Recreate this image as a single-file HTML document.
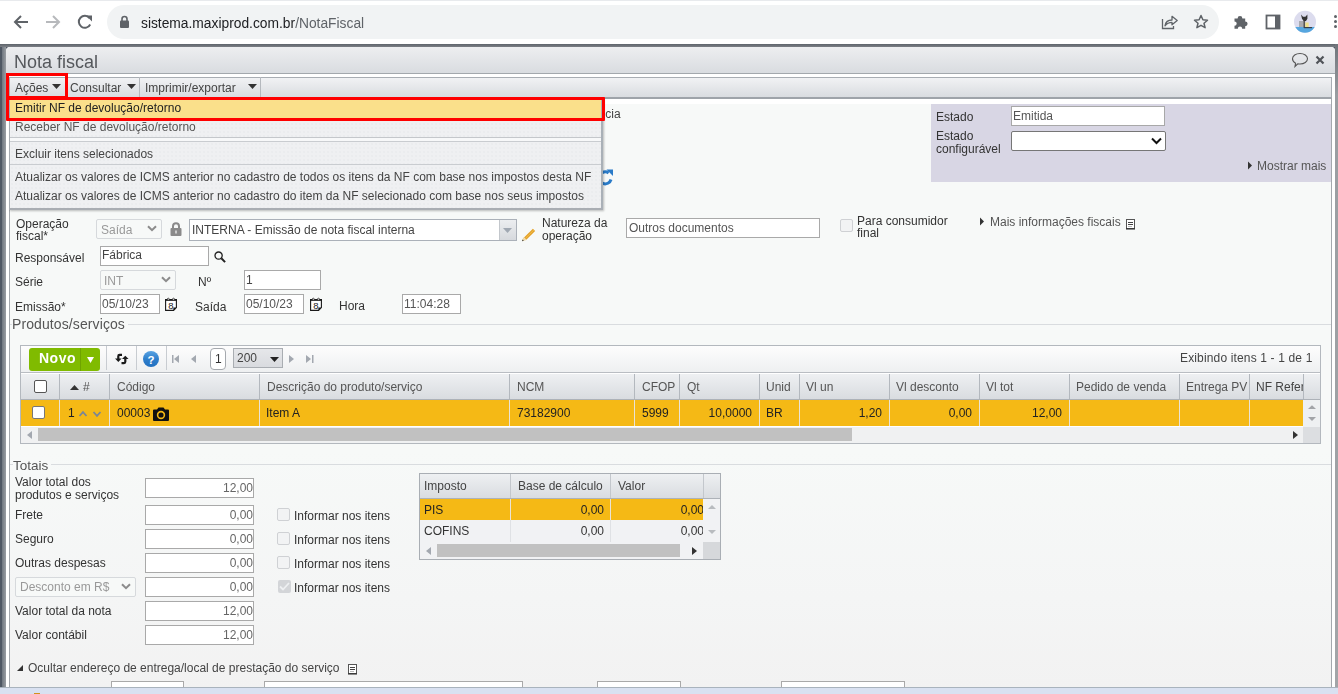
<!DOCTYPE html>
<html><head><meta charset="utf-8">
<style>
*{box-sizing:border-box}
html,body{margin:0;padding:0}
body{width:1338px;height:694px;overflow:hidden;position:relative;background:#f6f7f7;font-family:"Liberation Sans",sans-serif;font-size:12px;color:#333}
.a{position:absolute}
.t{will-change:transform;position:absolute;white-space:nowrap;line-height:14px;font-size:12px;color:#333}
.inp{position:absolute;background:#fff;border:1px solid #a9a9a9}
.sel{position:absolute;background:#f7f9f8;border:1px solid #d6d9dc;border-radius:2px}
.vd{position:absolute;width:1px;background:#c5c9ce}
</style></head><body>

<!-- ===== Browser chrome ===== -->
<div class="a" style="left:0;top:0;width:1338px;height:44px;background:#fff"></div>
<div class="a" style="left:0;top:0;width:1338px;height:1px;background:#e8eaed"></div>
<div class="a" style="left:107px;top:5px;width:1112px;height:34px;border-radius:17px;background:#f1f3f4"></div>
<!-- back -->
<svg class="a" style="left:13px;top:14px" width="16" height="16" viewBox="0 0 16 16"><path d="M15 8H2.5M8 2L2 8l6 6" fill="none" stroke="#5f6368" stroke-width="2"/></svg>
<!-- forward -->
<svg class="a" style="left:45px;top:14px" width="16" height="16" viewBox="0 0 16 16"><path d="M1 8h12.5M8 2l6 6-6 6" fill="none" stroke="#b7b9bc" stroke-width="2"/></svg>
<!-- reload -->
<svg class="a" style="left:77px;top:14px" width="16" height="16" viewBox="0 0 16 16"><path d="M13.2 10.5A6 6 0 1 1 12.5 4" fill="none" stroke="#5f6368" stroke-width="2"/><path d="M9 1.5h6v6z" fill="#5f6368"/></svg>
<!-- lock -->
<svg class="a" style="left:119px;top:15px" width="11" height="13" viewBox="0 0 11 13"><rect x="1" y="5.5" width="9" height="7.5" rx="1" fill="#5f6368"/><path d="M3 6V4a2.5 2.5 0 0 1 5 0v2" fill="none" stroke="#5f6368" stroke-width="1.6"/></svg>
<div class="t" style="left:141px;top:15px;font-size:13.8px;line-height:17px;color:#202124">sistema.maxiprod.com.br<span style="color:#5f6368">/NotaFiscal</span></div>
<!-- share -->
<svg class="a" style="left:1161px;top:14px" width="18" height="16" viewBox="0 0 18 16"><path d="M1.5 5V14.5H12.5V12" fill="none" stroke="#5f6368" stroke-width="1.3"/><path d="M4 11.8C4.6 8 7.2 6 11 6V2.3L16.2 6.6L11 10.8V8.4C8.2 8.4 5.8 9.6 4 11.8Z" fill="none" stroke="#5f6368" stroke-width="1.3" stroke-linejoin="round"/></svg>
<!-- star -->
<svg class="a" style="left:1193px;top:14px" width="16" height="16" viewBox="0 0 16 16"><path d="M8 1.5l1.9 4.3 4.6.4-3.5 3 1.1 4.5L8 11.3l-4.1 2.4 1.1-4.5-3.5-3 4.6-.4z" fill="none" stroke="#5f6368" stroke-width="1.5" stroke-linejoin="round"/></svg>
<!-- puzzle -->
<svg class="a" style="left:1233px;top:14px" width="16" height="16" viewBox="0 0 16 16"><path d="M1.5 4.5H4.6A2.4 2.4 0 1 1 9.4 4.5H12.2V7.4A2.4 2.4 0 1 1 12.2 12.2V14.8H9.2A2.2 2.2 0 1 0 4.8 14.8H1.5V11.8A2.2 2.2 0 1 0 1.5 7.4z" fill="#5f6368"/></svg>
<!-- sidebar -->
<svg class="a" style="left:1265px;top:14px" width="16" height="16" viewBox="0 0 16 16"><rect x="1.5" y="1.5" width="13" height="13" fill="none" stroke="#5f6368" stroke-width="1.8"/><rect x="10" y="1.5" width="4.5" height="13" fill="#5f6368"/></svg>
<!-- avatar -->
<svg class="a" style="left:1293px;top:10px" width="24" height="24" viewBox="0 0 24 24"><defs><clipPath id="cav"><circle cx="12" cy="11.8" r="11"/></clipPath></defs><g clip-path="url(#cav)"><rect width="24" height="24" fill="#dcdcee"/><rect y="17" width="24" height="7" fill="#56a6df"/><path d="M8 4.5l2 2.2h2.4l2-2.2v4.2l-1.4 2.3h-2.4L9 8.7z" fill="#333"/><rect x="6" y="11" width="5" height="6" fill="#a9abb0"/><rect x="10.5" y="11" width="1.6" height="7" fill="#555"/><rect x="12.3" y="12.5" width="3.4" height="5" fill="#efe08a"/><rect x="11" y="17" width="8" height="1.2" fill="#3a3f48"/></g></svg>
<!-- dots -->
<div class="a" style="left:1334px;top:15px;width:3px;height:3px;border-radius:50%;background:#5f6368"></div><div class="a" style="left:1334px;top:20px;width:3px;height:3px;border-radius:50%;background:#5f6368"></div><div class="a" style="left:1334px;top:25px;width:3px;height:3px;border-radius:50%;background:#5f6368"></div>

<!-- ===== Window frame ===== -->
<div class="a" style="left:0;top:44px;width:1338px;height:650px;background:#4f5864"></div><div class="a" style="left:0;top:44px;width:1338px;height:3px;background:linear-gradient(#5e646b,#7b7f85)"></div>
<div class="a" style="left:2px;top:47px;width:4px;height:640px;background:linear-gradient(90deg,#6f7780,#9a9ea3)"></div>
<div class="a" style="left:1335px;top:44px;width:3px;height:643px;background:linear-gradient(#6f747a,#9a9da1 8%,#a3a5a8)"></div>
<div class="a" style="left:6px;top:47px;width:1329px;height:640px;background:#fff;border-radius:4px 4px 0 0"></div>
<!-- title bar -->
<div class="a" style="left:6px;top:47px;width:1329px;height:27px;border-radius:4px 4px 0 0;background:linear-gradient(#edeef0,#d9dce0);border-bottom:1px solid #a3a8ad"></div>
<div class="t" style="left:14px;top:52px;font-size:18px;line-height:21px;color:#55585c">Nota fiscal</div>
<svg class="a" style="left:1291px;top:52px" width="18" height="16" viewBox="0 0 18 16"><path d="M9 1.5c4.2 0 7.5 2.4 7.5 5.3S13.2 12 9 12c-.8 0-1.5-.1-2.2-.2L4 14.5l.6-3.3C2.7 10.2 1.5 8.6 1.5 6.8 1.5 3.9 4.8 1.5 9 1.5z" fill="none" stroke="#555" stroke-width="1.1"/></svg>
<svg class="a" style="left:1315px;top:55px" width="10" height="10" viewBox="0 0 10 10"><path d="M1.5 1.5l7 7M8.5 1.5l-7 7" stroke="#505358" stroke-width="2.2"/></svg>

<!-- content background -->
<div class="a" style="left:9px;top:98px;width:1323px;height:589px;background:linear-gradient(#f7f9f8 0%,#f7f9f8 60%,#f4f5f5 85%,#f2f2f2 100%);border-left:1px solid #a4a8ad;border-right:1px solid #a4a8ad"></div>
<div class="a" style="left:10px;top:98px;width:1321px;height:6px;background:#fff"></div>

<!-- toolbar -->
<div class="a" style="left:9px;top:77px;width:1323px;height:22px;background:linear-gradient(#f1f2f4,#d9dce0);border:1px solid #a8adb3;border-bottom:2px solid #9ea3a9"></div>
<div class="t" style="left:15px;top:81px;color:#444">Ações</div>
<svg class="a" style="left:52px;top:84px" width="9" height="5"><path d="M0 0h9L4.5 5z" fill="#333"/></svg>
<div class="vd" style="left:67px;top:77px;height:20px;background:#b5b9be"></div>
<div class="t" style="left:70px;top:81px;color:#444">Consultar</div>
<svg class="a" style="left:127px;top:84px" width="9" height="5"><path d="M0 0h9L4.5 5z" fill="#333"/></svg>
<div class="vd" style="left:139px;top:77px;height:20px;background:#b5b9be"></div>
<div class="t" style="left:145px;top:81px;color:#444">Imprimir/exportar</div>
<svg class="a" style="left:248px;top:84px" width="9" height="5"><path d="M0 0h9L4.5 5z" fill="#333"/></svg>
<div class="vd" style="left:260px;top:77px;height:20px;background:#b5b9be"></div>


<!-- hidden-ish label under menu -->
<div class="t" style="left:592px;top:107px;color:#444">ência</div>
<svg class="a" style="left:599px;top:168px" width="15" height="19" viewBox="0 0 15 19"><path d="M12 11.5a6 6 0 1 1-2.4-6.6" fill="none" stroke="#2a7bc8" stroke-width="3"/><path d="M7.5 1.5h6.5v6.5z" fill="#2a7bc8"/></svg>

<!-- status panel -->
<div class="a" style="left:931px;top:104px;width:400px;height:78px;background:#d8d6e4"></div>
<div class="t" style="left:936px;top:110px">Estado</div>
<div class="inp" style="left:1011px;top:106px;width:154px;height:20px;border-color:#a8a8a8"></div>
<div class="t" style="left:1013px;top:109px;color:#555">Emitida</div>
<div class="t" style="left:936px;top:130px;line-height:13px">Estado<br>configurável</div>
<div class="a" style="left:1011px;top:131px;width:155px;height:20px;background:#fff;border:1px solid #767676;border-radius:2px"></div>
<svg class="a" style="left:1151px;top:137px" width="11" height="8" viewBox="0 0 11 8"><path d="M1 1.5l4.5 4.5L10 1.5" fill="none" stroke="#111" stroke-width="2"/></svg>
<svg class="a" style="left:1247px;top:161px" width="6" height="9"><path d="M1 0.5l4 4-4 4z" fill="#333"/></svg>
<div class="t" style="left:1257px;top:159px;color:#555">Mostrar mais</div>

<!-- form rows -->
<div class="t" style="left:16px;top:218px;line-height:12px">Operação<br>fiscal*</div>
<div class="sel" style="left:96px;top:219px;width:66px;height:20px"></div>
<div class="t" style="left:101px;top:223px;color:#999">Saída</div>
<svg class="a" style="left:147px;top:225px" width="10" height="7" viewBox="0 0 10 7"><path d="M1 1.2l4 4 4-4" fill="none" stroke="#8c8c8c" stroke-width="2"/></svg>
<svg class="a" style="left:170px;top:222px" width="12" height="14" viewBox="0 0 12 14"><rect x="0.5" y="6" width="11" height="8" rx="1" fill="#8a8a8a"/><path d="M3 6.5V4.2a3 3 0 0 1 6 0v2.3" fill="none" stroke="#8a8a8a" stroke-width="2"/><rect x="5.2" y="8.5" width="1.6" height="3" fill="#ddd"/></svg>
<div class="a" style="left:189px;top:219px;width:328px;height:22px;background:#fff;border:1px solid #abb1b9"></div>
<div class="a" style="left:499px;top:220px;width:17px;height:20px;background:linear-gradient(#eceef0,#d6d9dd);border-left:1px solid #c3c7cc"></div>
<svg class="a" style="left:503px;top:228px" width="9" height="5"><path d="M0 0h9L4.5 5z" fill="#a0a8b2"/></svg>
<div class="t" style="left:192px;top:223px;color:#444">INTERNA - Emissão de nota fiscal interna</div>
<svg class="a" style="left:521px;top:227px" width="16" height="15" viewBox="0 0 16 15"><path d="M4.2 11.6L13 2.8" stroke="#e3a02a" stroke-width="3.2" stroke-linecap="butt"/><path d="M4.2 11.6L13 2.8" stroke="#f2c14a" stroke-width="1"/><path d="M1 14.2L2.3 10.3L5.5 13z" fill="#efd7a0"/><path d="M1 14.2L1.6 12.4L2.9 13.6z" fill="#333"/></svg>
<div class="t" style="left:542px;top:217px;line-height:13px">Natureza da<br>operação</div>
<div class="inp" style="left:626px;top:218px;width:194px;height:20px"></div>
<div class="t" style="left:629px;top:221px;color:#555">Outros documentos</div>
<div class="a" style="left:840px;top:219px;width:13px;height:13px;border:1px solid #cfd1d4;border-radius:2px;background:#f2f3f4"></div>
<div class="t" style="left:857px;top:215px;line-height:12px">Para consumidor<br>final</div>
<svg class="a" style="left:979px;top:217px" width="6" height="9"><path d="M1 0.5l4 4-4 4z" fill="#333"/></svg>
<div class="t" style="left:990px;top:215px;color:#555">Mais informações fiscais</div>
<svg class="a" style="left:1126px;top:219px" width="10" height="11" viewBox="0 0 10 11"><rect x="0.5" y="0.5" width="8" height="9" fill="#fff" stroke="#555" stroke-width="1"/><path d="M0 10h9" stroke="#222" stroke-width="1"/><path d="M2 3.5h5M2 5.5h5" stroke="#444" stroke-width="1"/><path d="M2 7.5h4" stroke="#bbb" stroke-width="1"/></svg>

<div class="t" style="left:15px;top:251px">Responsável</div>
<div class="inp" style="left:100px;top:246px;width:109px;height:20px"></div>
<div class="t" style="left:102px;top:248px;color:#444">Fábrica</div>
<svg class="a" style="left:214px;top:251px" width="12" height="12" viewBox="0 0 12 12"><circle cx="4.6" cy="4.6" r="3.6" fill="none" stroke="#222" stroke-width="1.3"/><path d="M7.3 7.3l3.8 3.8" stroke="#222" stroke-width="2"/></svg>

<div class="t" style="left:15px;top:275px">Série</div>
<div class="sel" style="left:100px;top:270px;width:76px;height:20px"></div>
<div class="t" style="left:104px;top:274px;color:#999">INT</div>
<svg class="a" style="left:161px;top:276px" width="10" height="7" viewBox="0 0 10 7"><path d="M1 1.2l4 4 4-4" fill="none" stroke="#8c8c8c" stroke-width="2"/></svg>
<div class="t" style="left:198px;top:275px">Nº</div>
<div class="inp" style="left:244px;top:270px;width:77px;height:20px"></div>
<div class="t" style="left:246px;top:273px;color:#444">1</div>

<div class="t" style="left:15px;top:300px">Emissão*</div>
<div class="inp" style="left:100px;top:294px;width:60px;height:20px"></div>
<div class="t" style="left:102px;top:297px;color:#555">05/10/23</div>
<svg class="a" style="left:164px;top:297px" width="14" height="15" viewBox="0 0 14 15"><path d="M1.6 2.6H12.4V10.6L9.6 13.4H1.6z" fill="#fff" stroke="#1a1a1a" stroke-width="1.1"/><rect x="1" y="2" width="12" height="1.8" fill="#1a1a1a"/><circle cx="4.3" cy="2.2" r="1" fill="#fff" stroke="#1a1a1a" stroke-width="0.7"/><circle cx="9.5" cy="2.2" r="1" fill="#fff" stroke="#1a1a1a" stroke-width="0.7"/><path d="M9.4 13.4V10.6H12.4z" fill="#1a1a1a"/><text x="7" y="12" font-size="9.5" text-anchor="middle" font-family="Liberation Sans" fill="#1a1a1a">8</text></svg>
<div class="t" style="left:195px;top:300px">Saída</div>
<div class="inp" style="left:244px;top:294px;width:60px;height:20px"></div>
<div class="t" style="left:246px;top:297px;color:#555">05/10/23</div>
<svg class="a" style="left:309px;top:297px" width="14" height="15" viewBox="0 0 14 15"><path d="M1.6 2.6H12.4V10.6L9.6 13.4H1.6z" fill="#fff" stroke="#1a1a1a" stroke-width="1.1"/><rect x="1" y="2" width="12" height="1.8" fill="#1a1a1a"/><circle cx="4.3" cy="2.2" r="1" fill="#fff" stroke="#1a1a1a" stroke-width="0.7"/><circle cx="9.5" cy="2.2" r="1" fill="#fff" stroke="#1a1a1a" stroke-width="0.7"/><path d="M9.4 13.4V10.6H12.4z" fill="#1a1a1a"/><text x="7" y="12" font-size="9.5" text-anchor="middle" font-family="Liberation Sans" fill="#1a1a1a">8</text></svg>
<div class="t" style="left:339px;top:299px">Hora</div>
<div class="inp" style="left:402px;top:294px;width:59px;height:20px"></div>
<div class="t" style="left:404px;top:297px;color:#555">11:04:28</div>

<!-- Produtos/serviços legend -->
<div class="a" style="left:10px;top:324px;width:1321px;height:1px;background:#d9dcdf"></div>
<div class="t" style="left:12px;top:316px;font-size:14px;letter-spacing:0.1px;line-height:17px;color:#555;background:#f7f9f8;padding-right:3px">Produtos/serviços</div>


<!-- ===== products grid ===== -->
<div class="a" style="left:20px;top:345px;width:1301px;height:99px;background:#fff;border:1px solid #b3b8be"></div>
<div class="a" style="left:21px;top:346px;width:1299px;height:27px;background:linear-gradient(#fdfdfd,#eef0f1);border-bottom:1px solid #b9bdc2"></div>
<div class="a" style="left:29px;top:348px;width:71px;height:23px;background:#80bb00;border-radius:3px"></div>
<div class="a" style="left:80px;top:348px;width:1px;height:23px;background:#6fa300"></div>
<div class="t" style="left:39px;top:350px;font-size:14px;line-height:17px;font-weight:bold;letter-spacing:0.5px;color:#fff">Novo</div>
<svg class="a" style="left:87px;top:357px" width="7" height="6"><path d="M0 0h7L3.5 6z" fill="#fff"/></svg>
<div class="vd" style="left:106px;top:346px;height:24px;background:#c8ccd1"></div>
<svg class="a" style="left:114px;top:353px" width="16" height="12" viewBox="0 0 16 12"><path d="M8 1.9H5.6Q4.3 1.9 4.3 3.2V6.5" fill="none" stroke="#1a1a1a" stroke-width="2.2"/><path d="M1 5.6H7.6L4.3 9z" fill="#1a1a1a"/><path d="M7.5 10.1H10Q11.3 10.1 11.3 8.8V5.5" fill="none" stroke="#1a1a1a" stroke-width="2.2"/><path d="M8 6.1H14.6L11.3 2.7z" fill="#1a1a1a"/></svg>
<div class="vd" style="left:136px;top:346px;height:24px;background:#c8ccd1"></div>
<svg class="a" style="left:143px;top:351px" width="16" height="16" viewBox="0 0 16 16"><defs><linearGradient id="hg" x1="0" y1="0" x2="0" y2="1"><stop offset="0" stop-color="#5aa3e3"/><stop offset="0.5" stop-color="#2f7fcc"/><stop offset="1" stop-color="#2270c0"/></linearGradient></defs><circle cx="8" cy="8" r="8" fill="url(#hg)"/><text x="8" y="12.7" font-size="11.5" font-weight="bold" text-anchor="middle" font-family="Liberation Sans" fill="#fff">?</text></svg>
<div class="vd" style="left:166px;top:346px;height:24px;background:#c8ccd1"></div>
<svg class="a" style="left:172px;top:355px" width="8" height="8"><rect x="0" y="0" width="1.5" height="8" fill="#a3a8b0"/><path d="M7 0v8L2 4z" fill="#a3a8b0"/></svg>
<svg class="a" style="left:191px;top:355px" width="6" height="8"><path d="M5 0v8L0 4z" fill="#a3a8b0"/></svg>
<div class="a" style="left:210px;top:348px;width:16px;height:22px;background:#fff;border:1px solid #a5a9ae;border-radius:4px"></div>
<div class="t" style="left:215px;top:352px;color:#333">1</div>
<div class="a" style="left:233px;top:348px;width:50px;height:20px;background:linear-gradient(#e6e7ea,#d9dbdf);border:1px solid #a9adb2"></div>
<div class="t" style="left:237px;top:351px;color:#444">200</div>
<svg class="a" style="left:270px;top:357px" width="9" height="5"><path d="M0 0h9L4.5 5z" fill="#222"/></svg>
<svg class="a" style="left:289px;top:355px" width="6" height="8"><path d="M0 0v8l5-4z" fill="#a3a8b0"/></svg>
<svg class="a" style="left:306px;top:355px" width="8" height="8"><path d="M0 0v8l5-4z" fill="#a3a8b0"/><rect x="6" y="0" width="1.5" height="8" fill="#a3a8b0"/></svg>
<div class="t" style="left:1180px;top:351px;letter-spacing:0.15px;color:#444">Exibindo itens 1 - 1 de 1</div>

<!-- header -->
<div class="a" style="left:21px;top:374px;width:1299px;height:26px;background:linear-gradient(#eef0f2,#d9dce0);border-bottom:1px solid #adb2b8"></div>
<div class="a" style="left:34px;top:380px;width:13px;height:13px;background:#fff;border:1px solid #555;border-radius:2px"></div>
<svg class="a" style="left:70px;top:385px" width="9" height="5"><path d="M0 5h9L4.5 0z" fill="#333"/></svg>
<div class="t" style="left:83px;top:380px;color:#555">#</div>
<div class="t" style="left:117px;top:380px;color:#555">Código</div>
<div class="t" style="left:267px;top:380px;color:#555">Descrição do produto/serviço</div>
<div class="t" style="left:517px;top:380px;color:#555">NCM</div>
<div class="t" style="left:642px;top:380px;color:#555">CFOP</div>
<div class="t" style="left:687px;top:380px;color:#555">Qt</div>
<div class="t" style="left:766px;top:380px;color:#555">Unid</div>
<div class="t" style="left:806px;top:380px;color:#555">Vl un</div>
<div class="t" style="left:896px;top:380px;color:#555">Vl desconto</div>
<div class="t" style="left:986px;top:380px;color:#555">Vl tot</div>
<div class="t" style="left:1076px;top:380px;color:#555">Pedido de venda</div>
<div class="t" style="left:1186px;top:380px;color:#555">Entrega PV</div>
<div class="a" style="left:1256px;top:374px;width:47px;height:25px;overflow:hidden"><div class="t" style="left:0;top:6px;color:#444">NF Referenciada</div></div>
<div class="vd" style="left:59px;top:374px;height:25px;background:#b3b8be"></div>
<div class="vd" style="left:109px;top:374px;height:25px;background:#b3b8be"></div>
<div class="vd" style="left:259px;top:374px;height:25px;background:#b3b8be"></div>
<div class="vd" style="left:509px;top:374px;height:25px;background:#b3b8be"></div>
<div class="vd" style="left:634px;top:374px;height:25px;background:#b3b8be"></div>
<div class="vd" style="left:679px;top:374px;height:25px;background:#b3b8be"></div>
<div class="vd" style="left:759px;top:374px;height:25px;background:#b3b8be"></div>
<div class="vd" style="left:799px;top:374px;height:25px;background:#b3b8be"></div>
<div class="vd" style="left:889px;top:374px;height:25px;background:#b3b8be"></div>
<div class="vd" style="left:979px;top:374px;height:25px;background:#b3b8be"></div>
<div class="vd" style="left:1069px;top:374px;height:25px;background:#b3b8be"></div>
<div class="vd" style="left:1179px;top:374px;height:25px;background:#b3b8be"></div>
<div class="vd" style="left:1249px;top:374px;height:25px;background:#b3b8be"></div>
<div class="vd" style="left:1303px;top:374px;height:25px;background:#b3b8be"></div>

<!-- row -->
<div class="a" style="left:21px;top:400px;width:1282px;height:26px;background:#f5b915"></div>
<div class="a" style="left:1303px;top:400px;width:17px;height:27px;background:#eef0f2"></div>
<svg class="a" style="left:1307px;top:404px" width="10" height="18"><path d="M1 5h8L5 1.2z" fill="#a2a4a8"/><path d="M1 13h8l-4 4z" fill="#a2a4a8"/></svg>
<div class="a" style="left:32px;top:406px;width:13px;height:13px;background:#fff;border:1px solid #777;border-radius:2px"></div>
<div class="t" style="left:68px;top:406px;color:#222">1</div>
<svg class="a" style="left:78px;top:410px" width="24" height="8" viewBox="0 0 24 8"><path d="M1.5 6L5 2.2L8.5 6" fill="none" stroke="#7b8696" stroke-width="1.8"/><path d="M15.5 2L19 5.8L22.5 2" fill="none" stroke="#7b8696" stroke-width="1.8"/></svg>
<div class="t" style="left:117px;top:406px;color:#222">00003</div>
<svg class="a" style="left:153px;top:407px" width="16" height="14" viewBox="0 0 16 14"><path d="M0 3.5Q0 2.5 1 2.5H4L5.5 0.5H10.5L12 2.5H15Q16 2.5 16 3.5V13Q16 14 15 14H1Q0 14 0 13z" fill="#111"/><circle cx="8" cy="8" r="3.4" fill="none" stroke="#f5b915" stroke-width="1.6"/></svg>
<div class="t" style="left:266px;top:406px;color:#222">Item A</div>
<div class="t" style="left:517px;top:406px;color:#222">73182900</div>
<div class="t" style="left:642px;top:406px;color:#222">5999</div>
<div class="t" style="left:680px;top:406px;width:72px;text-align:right;color:#222">10,0000</div>
<div class="t" style="left:766px;top:406px;color:#222">BR</div>
<div class="t" style="left:800px;top:406px;width:82px;text-align:right;color:#222">1,20</div>
<div class="t" style="left:890px;top:406px;width:82px;text-align:right;color:#222">0,00</div>
<div class="t" style="left:980px;top:406px;width:82px;text-align:right;color:#222">12,00</div>
<div class="vd" style="left:59px;top:400px;height:26px;background:#e9e3d6"></div>
<div class="vd" style="left:109px;top:400px;height:26px;background:#e9e3d6"></div>
<div class="vd" style="left:259px;top:400px;height:26px;background:#e9e3d6"></div>
<div class="vd" style="left:509px;top:400px;height:26px;background:#e9e3d6"></div>
<div class="vd" style="left:634px;top:400px;height:26px;background:#e9e3d6"></div>
<div class="vd" style="left:679px;top:400px;height:26px;background:#e9e3d6"></div>
<div class="vd" style="left:759px;top:400px;height:26px;background:#e9e3d6"></div>
<div class="vd" style="left:799px;top:400px;height:26px;background:#e9e3d6"></div>
<div class="vd" style="left:889px;top:400px;height:26px;background:#e9e3d6"></div>
<div class="vd" style="left:979px;top:400px;height:26px;background:#e9e3d6"></div>
<div class="vd" style="left:1069px;top:400px;height:26px;background:#e9e3d6"></div>
<div class="vd" style="left:1179px;top:400px;height:26px;background:#e9e3d6"></div>
<div class="vd" style="left:1249px;top:400px;height:26px;background:#e9e3d6"></div>
<!-- h scroll -->
<div class="a" style="left:21px;top:427px;width:1299px;height:16px;background:#f0f1f2"></div>
<div class="a" style="left:1303px;top:427px;width:17px;height:16px;background:#dcdee1"></div>
<svg class="a" style="left:27px;top:431px" width="5" height="8"><path d="M5 0v8L0 4z" fill="#a3a8b0"/></svg>
<div class="a" style="left:38px;top:428px;width:814px;height:13px;background:#c1c1c1"></div>
<svg class="a" style="left:1293px;top:431px" width="5" height="8"><path d="M0 0v8l5-4z" fill="#333"/></svg>


<!-- ===== Totais ===== -->
<div class="a" style="left:10px;top:464px;width:1321px;height:1px;background:#d9dcdf"></div>
<div class="t" style="left:13px;top:457px;font-size:13.5px;line-height:17px;color:#555;background:#f7f9f8;padding-right:3px">Totais</div>
<div class="t" style="left:15px;top:476px;line-height:13px">Valor total dos<br>produtos e serviços</div>
<div class="inp" style="left:145px;top:478px;width:109px;height:20px"></div>
<div class="t" style="left:145px;top:481px;width:108px;text-align:right;color:#666">12,00</div>
<div class="t" style="left:15px;top:508px">Frete</div>
<div class="inp" style="left:145px;top:505px;width:109px;height:20px"></div>
<div class="t" style="left:145px;top:508px;width:108px;text-align:right;color:#666">0,00</div>
<div class="t" style="left:15px;top:532px">Seguro</div>
<div class="inp" style="left:145px;top:529px;width:109px;height:20px"></div>
<div class="t" style="left:145px;top:532px;width:108px;text-align:right;color:#666">0,00</div>
<div class="t" style="left:15px;top:556px">Outras despesas</div>
<div class="inp" style="left:145px;top:553px;width:109px;height:20px"></div>
<div class="t" style="left:145px;top:556px;width:108px;text-align:right;color:#666">0,00</div>
<div class="sel" style="left:15px;top:577px;width:121px;height:20px"></div>
<div class="t" style="left:20px;top:580px;color:#999">Desconto em R$</div>
<svg class="a" style="left:121px;top:583px" width="10" height="7" viewBox="0 0 10 7"><path d="M1 1.2l4 4 4-4" fill="none" stroke="#8c8c8c" stroke-width="2"/></svg>
<div class="inp" style="left:145px;top:577px;width:109px;height:20px"></div>
<div class="t" style="left:145px;top:580px;width:108px;text-align:right;color:#666">0,00</div>
<div class="t" style="left:15px;top:604px">Valor total da nota</div>
<div class="inp" style="left:145px;top:601px;width:109px;height:20px"></div>
<div class="t" style="left:145px;top:604px;width:108px;text-align:right;color:#666">12,00</div>
<div class="t" style="left:15px;top:628px">Valor contábil</div>
<div class="inp" style="left:145px;top:625px;width:109px;height:20px"></div>
<div class="t" style="left:145px;top:628px;width:108px;text-align:right;color:#666">12,00</div>

<div class="a" style="left:277px;top:508px;width:13px;height:13px;border:1px solid #cfd1d4;border-radius:2px;background:#f2f3f4"></div>
<div class="t" style="left:294px;top:509px">Informar nos itens</div>
<div class="a" style="left:277px;top:532px;width:13px;height:13px;border:1px solid #cfd1d4;border-radius:2px;background:#f2f3f4"></div>
<div class="t" style="left:294px;top:533px">Informar nos itens</div>
<div class="a" style="left:277px;top:556px;width:13px;height:13px;border:1px solid #cfd1d4;border-radius:2px;background:#f2f3f4"></div>
<div class="t" style="left:294px;top:557px">Informar nos itens</div>
<div class="a" style="left:278px;top:580px;width:13px;height:13px;border-radius:2px;background:#d3d5d8"></div>
<svg class="a" style="left:279px;top:582px" width="11" height="9"><path d="M1 4.5l3 3 6-6.5" fill="none" stroke="#eef0f2" stroke-width="1.8"/></svg>
<div class="t" style="left:294px;top:581px">Informar nos itens</div>

<!-- tax table -->
<div class="a" style="left:419px;top:473px;width:302px;height:87px;background:#f1f2f4;border:1px solid #a9aeb4"></div>
<div class="a" style="left:420px;top:474px;width:300px;height:25px;background:linear-gradient(#eef0f2,#d9dce0);border-bottom:1px solid #adb2b8"></div>
<div class="t" style="left:424px;top:479px;color:#444">Imposto</div>
<div class="t" style="left:518px;top:479px;color:#444">Base de cálculo</div>
<div class="t" style="left:618px;top:479px;color:#444">Valor</div>
<div class="vd" style="left:510px;top:474px;height:24px;background:#c3c7cc"></div>
<div class="vd" style="left:610px;top:474px;height:24px;background:#c3c7cc"></div>
<div class="vd" style="left:703px;top:474px;height:24px;background:#c3c7cc"></div>
<div class="a" style="left:420px;top:499px;width:283px;height:21px;background:#f5b915"></div>
<div class="vd" style="left:510px;top:499px;height:21px;background:#e9e3d6"></div>
<div class="vd" style="left:610px;top:499px;height:21px;background:#e9e3d6"></div>
<div class="vd" style="left:510px;top:520px;height:22px;background:#dfe1e4"></div>
<div class="vd" style="left:610px;top:520px;height:22px;background:#dfe1e4"></div>
<div class="t" style="left:424px;top:503px;color:#222">PIS</div>
<div class="t" style="left:511px;top:503px;width:93px;text-align:right;color:#222">0,00</div>
<div class="a" style="left:611px;top:499px;width:92px;height:43px;overflow:hidden"><div class="t" style="left:0;top:4px;width:93px;text-align:right;color:#222">0,00</div><div class="t" style="left:0;top:25px;width:93px;text-align:right;color:#333">0,00</div></div>
<div class="t" style="left:424px;top:524px;color:#333">COFINS</div>
<div class="t" style="left:511px;top:524px;width:93px;text-align:right;color:#333">0,00</div>
<svg class="a" style="left:707px;top:503px" width="10" height="32"><path d="M1 6h8L5 2z" fill="#b8bbbf"/><path d="M1 27h8l-4 4z" fill="#b8bbbf"/></svg>
<div class="a" style="left:703px;top:542px;width:17px;height:17px;background:#d6d8db"></div>
<svg class="a" style="left:426px;top:547px" width="5" height="8"><path d="M5 0v8L0 4z" fill="#a3a8b0"/></svg>
<div class="a" style="left:437px;top:544px;width:243px;height:13px;background:#c1c1c1"></div>
<svg class="a" style="left:692px;top:547px" width="5" height="8"><path d="M0 0v8l5-4z" fill="#333"/></svg>

<!-- bottom -->
<svg class="a" style="left:17px;top:665px" width="6" height="6"><path d="M6 0v6H0z" fill="#333"/></svg>
<div class="t" style="left:28px;top:661px;color:#444">Ocultar endereço de entrega/local de prestação do serviço</div>
<svg class="a" style="left:348px;top:664px" width="10" height="11" viewBox="0 0 10 11"><rect x="0.5" y="0.5" width="8" height="9" fill="#fff" stroke="#555" stroke-width="1"/><path d="M0 10h9" stroke="#222" stroke-width="1"/><path d="M2 3.5h5M2 5.5h5" stroke="#444" stroke-width="1"/><path d="M2 7.5h4" stroke="#bbb" stroke-width="1"/></svg>
<div class="inp" style="left:111px;top:681px;width:73px;height:20px"></div>
<div class="inp" style="left:264px;top:681px;width:259px;height:20px"></div>
<div class="inp" style="left:597px;top:681px;width:84px;height:20px"></div>
<div class="inp" style="left:781px;top:681px;width:124px;height:20px"></div>
<!-- taskbar strip -->
<div class="a" style="left:0;top:687px;width:1338px;height:1px;background:#a9b3bd"></div>
<div class="a" style="left:0;top:688px;width:1338px;height:6px;background:#d9e1f1"></div>
<div class="a" style="left:34px;top:693px;width:6px;height:1px;background:#d3901e"></div>

<!-- SECTIONS -->

<!-- ===== dropdown menu ===== -->
<div class="a" style="left:9px;top:98px;width:594px;height:112px;background-color:#eff0f2;background-image:radial-gradient(#e6e7ea 0.6px,transparent 0.8px);background-size:4px 4px;border-left:1px solid #a6abb1;border-right:2px solid #a9b0b7;border-bottom:2px solid #a9adb3;box-shadow:1px 1px 2px rgba(0,0,0,0.25)"></div>
<div class="a" style="left:10px;top:99px;width:591px;height:19px;background:#fae08b"></div>
<div class="t" style="left:15px;top:101px;color:#222">Emitir NF de devolução/retorno</div>
<div class="t" style="left:15px;top:120px;color:#555">Receber NF de devolução/retorno</div>
<div class="a" style="left:10px;top:137px;width:591px;height:1px;background:#c4c7cb"></div>
<div class="a" style="left:10px;top:138px;width:591px;height:3px;background:#f7f8f9"></div>
<div class="a" style="left:10px;top:141px;width:591px;height:1px;background:#c9ccd0"></div>
<div class="t" style="left:15px;top:147px;color:#444">Excluir itens selecionados</div>
<div class="a" style="left:10px;top:164px;width:591px;height:1px;background:#c9ccd0"></div>
<div class="t" style="left:15px;top:170px;color:#444">Atualizar os valores de ICMS anterior no cadastro de todos os itens da NF com base nos impostos desta NF</div>
<div class="t" style="left:15px;top:189px;color:#444">Atualizar os valores de ICMS anterior no cadastro do item da NF selecionado com base nos seus impostos</div>

<!-- red highlight boxes -->
<div class="a" style="left:6px;top:73px;width:62px;height:26px;border:3px solid #f00"></div>
<div class="a" style="left:6px;top:97px;width:599px;height:24px;border:3px solid #f00;border-radius:1px"></div>


</body></html>
